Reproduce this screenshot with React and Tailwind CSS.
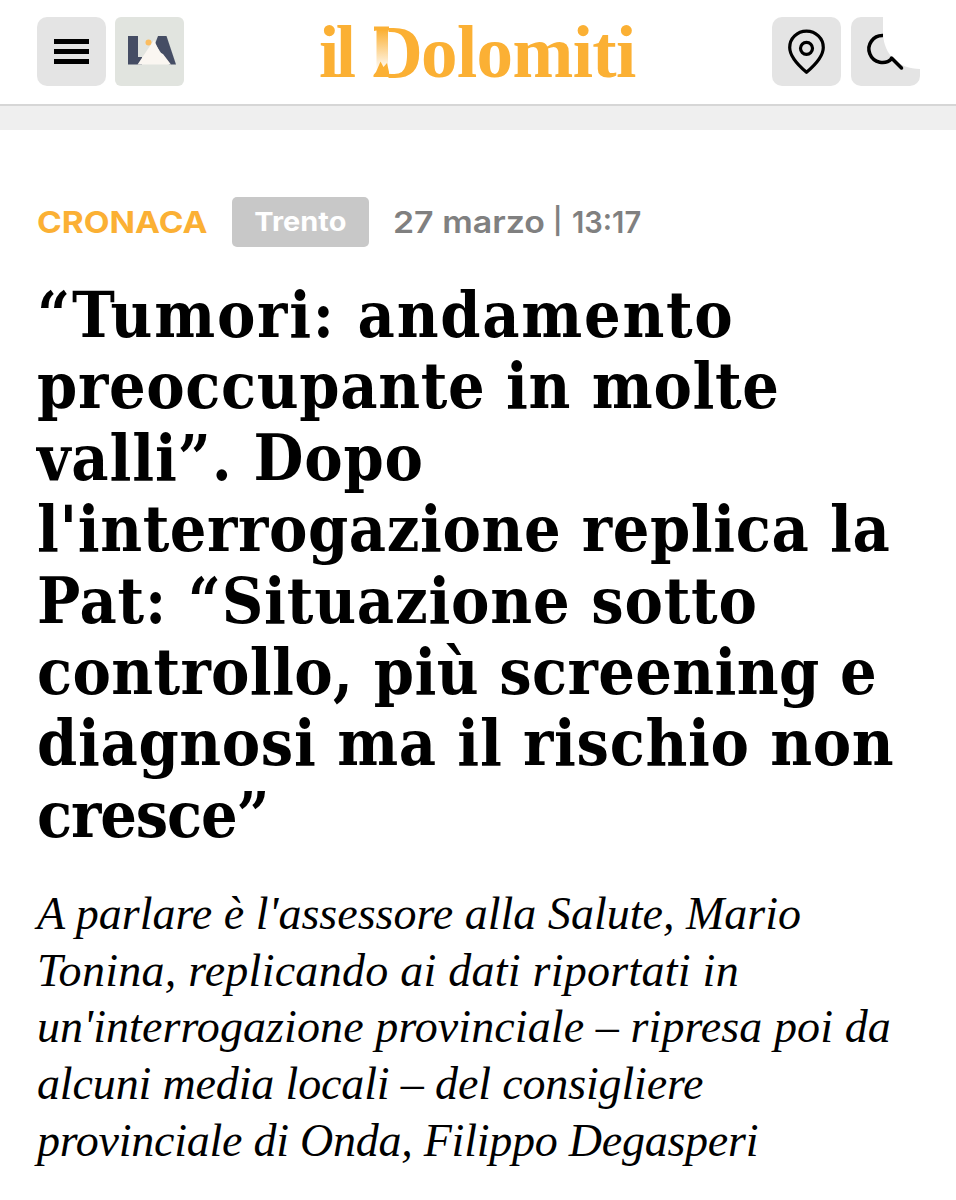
function MenuButton() {
  return (
    <button aria-label="Menu" className="flex size-[69px] items-center justify-center rounded-[10px] bg-[#e4e4e4]">
      <svg width="35" height="25" viewBox="0 0 35 25" aria-hidden="true">
        <path d="M0 0h35v5H0zM0 10h35v5H0zM0 20h35v5H0z" fill="#000" />
      </svg>
    </button>
  );
}

function PartnerButton() {
  return (
    <button aria-label="Partner" className="size-[69px] rounded-[6px] bg-[#e1e4df]">
      <svg width="69" height="69" viewBox="0 0 69 69" aria-hidden="true">
        <path d="M13 19H23V40H27V47.500H13Z" fill="#454d64" />
        <path d="M43 19H51.500L61 47.500H54L40 27Z" fill="#454d64" />
        <circle cx="33.500" cy="25.500" r="3" fill="#fbbd60" />
        <path d="M22.500 47.500L39 23L45 35.500L48 37L56 47.500Z" fill="#faf6f1" />
      </svg>
    </button>
  );
}

function PinButton() {
  return (
    <button aria-label="Luogo" className="size-[69px] rounded-[10px] bg-[#e4e4e4]">
      <svg width="69" height="69" viewBox="0 0 69 69" fill="none" stroke="#000" strokeWidth="3.200" aria-hidden="true">
        <path d="M34.500 55.300C30 51.500 17.700 41 17.700 30.500A16.800 16.300 0 0 1 51.300 30.500C51.300 41 39 51.500 34.500 55.300Z" strokeLinejoin="round" />
        <circle cx="34.500" cy="31.300" r="6" />
      </svg>
    </button>
  );
}

function SearchButton() {
  return (
    <button aria-label="Cerca" className="size-[69px] bg-transparent">
      <svg width="69" height="69" viewBox="0 0 69 69" fill="none" aria-hidden="true">
        <path d="M10 0H32V17C33 38 48 52 69 52V59A10 10 0 0 1 59 69H10A10 10 0 0 1 0 59V10A10 10 0 0 1 10 0Z" fill="#e4e4e4" />
        <path d="M32 18.500A13.500 13.500 0 1 0 41 41.500" stroke="#000" strokeWidth="3.500" />
        <path d="M40.500 41L50.500 51" stroke="#000" strokeWidth="3.500" strokeLinecap="round" />
      </svg>
    </button>
  );
}

function Logo() {
  return (
    <div className="flex h-[69px] w-[318px] text-[73px] leading-[72px] font-bold whitespace-nowrap text-[#fbb034] font-['Liberation_Serif',serif]">
      <span className="w-[54px] tracking-[-3.5px]">il</span>
      <span className="relative w-[48px]">
        <span className="-ml-1 inline-block origin-left scale-x-[0.98] text-[76px] leading-[70px]">D</span>
        <svg className="absolute top-[9px] -left-1" width="24" height="52" viewBox="-4 0 24 52" aria-hidden="true">
          <defs>
            <linearGradient id="stem" x1="0" y1="0" x2="0" y2="1">
              <stop offset="0" stopColor="#fbb034" />
              <stop offset="1" stopColor="#fff" />
            </linearGradient>
          </defs>
          <path d="M-4 0H15.500V52H-4Z" fill="#fff" />
          <path d="M3.500 4H15V45H3.500Z" fill="url(#stem)" />
          <path d="M1 0.500H16V4.500H3.500L1 5Z" fill="#fbb034" />
          <path d="M0.500 51V49L3 46L7.500 35.500L10.500 41L14 37L16 46V51Z" fill="#fbb034" />
        </svg>
      </span>
      <span className="tracking-[-0.6px]">olomiti</span>
    </div>
  );
}

export default function App() {
  return (
    <div className="min-h-[1200px] w-[956px] overflow-hidden bg-white text-black">
      <header className="flex h-[106px] items-start justify-between border-b-2 border-[#d6d6d6] pt-[17px] pr-[36px] pl-[37px]">
        <div className="flex gap-[9px]">
          <MenuButton />
          <PartnerButton />
        </div>
        <Logo />
        <div className="flex gap-[10px]">
          <PinButton />
          <SearchButton />
        </div>
      </header>
      <div className="h-6 bg-[#efefef]" />
      <main className="px-[37px] pt-[67px]">
        <div className="flex h-[50px] items-center whitespace-nowrap font-['Inter',sans-serif]">
          <span className="w-[195px] shrink-0 text-[30px] leading-none font-bold text-[#fbb034]">
            <span className="inline-block origin-left scale-x-[1.116]">CRONACA</span>
          </span>
          <span className="flex h-[50px] w-[137px] shrink-0 items-center justify-center rounded-[5px] bg-[#c8c8c8] text-[26px] leading-none font-bold text-white">
            <span className="inline-block scale-x-[1.113]">Trento</span>
          </span>
          <time className="ml-6 flex text-[30px] leading-none font-semibold text-[#808080]">
            <span className="w-[160px]"><span className="inline-block origin-left scale-x-[1.13]">27 marzo</span></span>
            <span className="w-[19px] text-[26px] leading-[28px]">|</span>
            <span className="inline-block origin-left scale-x-[0.97]">13:17</span>
          </time>
        </div>
        <h1 className="mt-[32px] text-[64px] leading-[71.4px] font-bold whitespace-nowrap font-['DejaVu_Serif_Condensed','DejaVu_Serif',serif]">
          <span className="block tracking-[1.75px]">“Tumori: andamento</span>
          <span className="block tracking-[0.67px]">preoccupante in molte</span>
          <span className="block tracking-[0.85px]">valli”. Dopo</span>
          <span className="block tracking-[0.6px]">l'interrogazione replica la</span>
          <span className="block tracking-[0.8px]">Pat: “Situazione sotto</span>
          <span className="block tracking-[0.36px]">controllo, più screening e</span>
          <span className="block tracking-[0.65px]">diagnosi ma il rischio non</span>
          <span className="block tracking-[-1.1px]">cresce”</span>
        </h1>
        <p className="mt-[36px] text-[46px] leading-[56.6px] whitespace-nowrap italic font-['Liberation_Serif',serif]">
          <span className="block tracking-[0.02px]">A parlare è l'assessore alla Salute, Mario</span>
          <span className="block tracking-[0.26px]">Tonina, replicando ai dati riportati in</span>
          <span className="block tracking-[0.1px]">un'interrogazione provinciale – ripresa poi da</span>
          <span className="block tracking-[-0.14px]">alcuni media locali – del consigliere</span>
          <span className="block tracking-[-0.24px]">provinciale di Onda, Filippo Degasperi</span>
        </p>
      </main>
    </div>
  );
}
